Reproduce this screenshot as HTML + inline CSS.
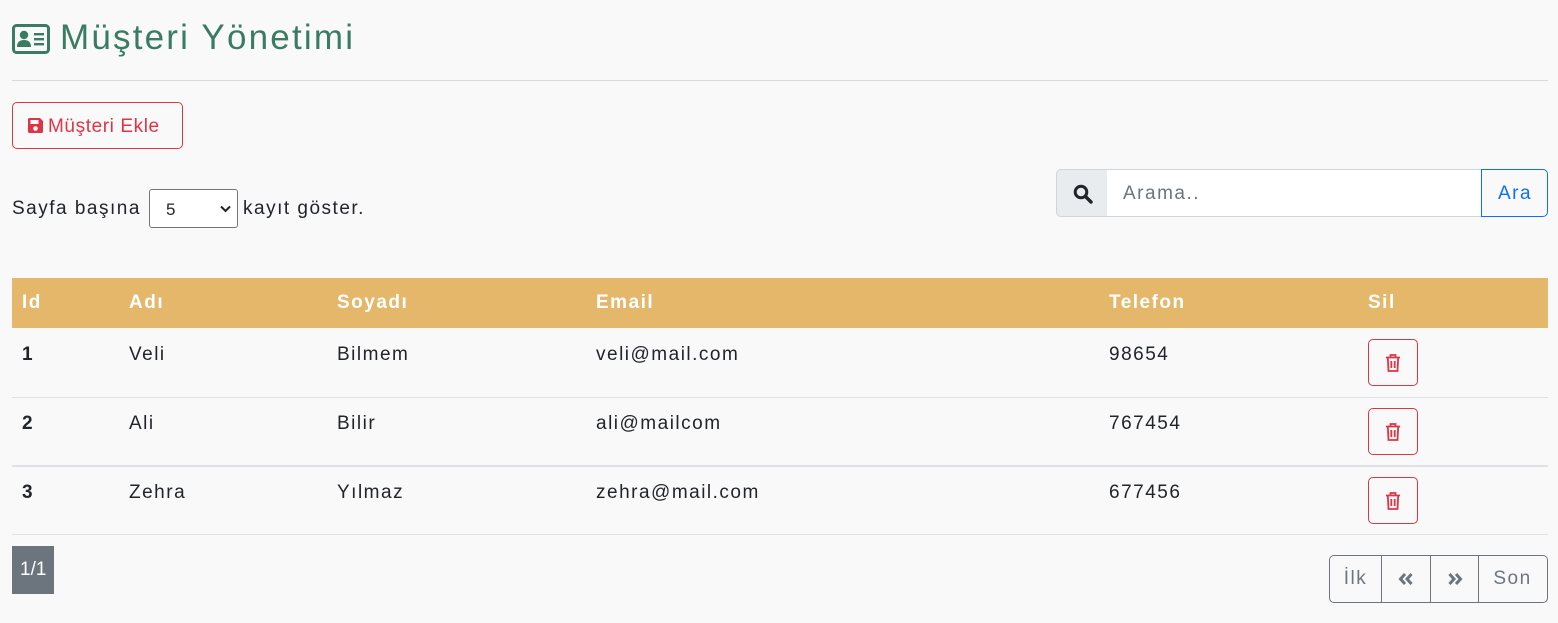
<!DOCTYPE html>
<html><head><meta charset="utf-8"><style>
*{box-sizing:border-box;margin:0;padding:0}
body{width:1558px;height:623px;background:#f9f9f9;font-family:"Liberation Sans",sans-serif;color:#212529;position:relative;overflow:hidden;font-size:19px;letter-spacing:1.5px}
.a{position:absolute;white-space:nowrap}
h1{position:absolute;left:60px;top:18px;font-size:35px;font-weight:normal;color:#3a7b64;letter-spacing:2.2px}
.hr{left:12px;top:80px;width:1536px;height:1px;background:#d6dbdb}
.btn1{left:12px;top:102px;width:171px;height:47px;border:1px solid #dc3545;border-radius:5px;color:#dc3545;font-size:19px;padding:13px 0 0 14px;white-space:nowrap;letter-spacing:0.6px}
.sel{left:149px;top:189px;width:89px;height:39px;border:1px solid #767676;border-radius:3px;background:#fff;font-size:17px;padding:10px 0 0 16px}
.th{top:278px;left:12px;width:1536px;height:50px;background:#e5b76b}
.th span{position:absolute;top:14px;color:#fff;font-weight:bold;font-size:19px}
.row span{position:absolute;font-size:19px}
.line{left:12px;width:1536px;height:1px;background:#dee2e6}
.del{width:50px;height:47px;border:1px solid #dc3545;border-radius:5px;left:1368px;display:flex;align-items:center;justify-content:center}
.pg{top:555px;height:48px;border:1px solid #6c757d;color:#6c757d;display:flex;align-items:center;justify-content:center;font-size:19px}
</style></head><body>
<svg class="a" style="left:12px;top:24px" width="38" height="30" viewBox="0 0 38 30"><rect x="1.5" y="1.5" width="35" height="27" rx="3" fill="none" stroke="#3a7b64" stroke-width="3"/><circle cx="12" cy="11" r="4.2" fill="#3a7b64"/><path d="M5 23 Q5 16 12 16 Q19 16 19 23Z" fill="#3a7b64"/><rect x="22" y="9" width="10" height="2.4" fill="#3a7b64"/><rect x="22" y="14" width="10" height="2.4" fill="#3a7b64"/><rect x="22" y="19" width="10" height="2.4" fill="#3a7b64"/></svg>
<h1>Müşteri Yönetimi</h1>
<div class="a hr"></div>
<div class="a btn1"><svg width="17" height="17" viewBox="0 0 17 17" style="vertical-align:-2px;margin-right:4px"><path d="M1 2.5Q1 1 2.5 1H13L16 4V14.5Q16 16 14.5 16H2.5Q1 16 1 14.5Z" fill="#dc3545"/><rect x="3.5" y="3" width="8" height="4" fill="#fff"/><circle cx="8.5" cy="11.5" r="2.3" fill="#fff"/></svg>Müşteri Ekle</div>
<div class="a" style="left:12px;top:198px">Sayfa başına</div>
<div class="a sel">5<svg style="position:absolute;right:6px;top:15px" width="11" height="8" viewBox="0 0 11 8"><path d="M1 1.5L5.5 6L10 1.5" fill="none" stroke="#222" stroke-width="2"/></svg></div>
<div class="a" style="left:243px;top:198px">kayıt göster.</div>
<div class="a" style="left:1056px;top:169px;width:52px;height:48px;background:#e9ecef;border:1px solid #ced4da;border-radius:5px 0 0 5px"><svg style="position:absolute;left:16px;top:14px" width="20" height="20" viewBox="0 0 20 20"><circle cx="8" cy="8" r="5.8" fill="none" stroke="#212529" stroke-width="3"/><path d="M12.5 12.5L18 18" stroke="#212529" stroke-width="3.4" stroke-linecap="round"/></svg></div>
<div class="a" style="left:1107px;top:169px;width:375px;height:48px;background:#fff;border:1px solid #ced4da;border-left:none;color:#6c757d;padding:13px 0 0 16px">Arama..</div>
<div class="a" style="left:1481px;top:169px;width:67px;height:48px;border:1px solid #0d6efd;border-radius:0 5px 5px 0;color:#0d6efd;padding:13px 0 0 16px">Ara</div>
<div class="a th"><span style="left:10px">Id</span><span style="left:117px">Adı</span><span style="left:325px">Soyadı</span><span style="left:584px">Email</span><span style="left:1097px">Telefon</span><span style="left:1356px">Sil</span></div>
<div class="row">
<span style="left:22px;top:344px;font-weight:bold">1</span><span style="left:129px;top:344px">Veli</span><span style="left:337px;top:344px">Bilmem</span><span style="left:596px;top:344px">veli@mail.com</span><span style="left:1109px;top:344px">98654</span>
<span style="left:22px;top:413px;font-weight:bold">2</span><span style="left:129px;top:413px">Ali</span><span style="left:337px;top:413px">Bilir</span><span style="left:596px;top:413px">ali@mailcom</span><span style="left:1109px;top:413px">767454</span>
<span style="left:22px;top:482px;font-weight:bold">3</span><span style="left:129px;top:482px">Zehra</span><span style="left:337px;top:482px">Yılmaz</span><span style="left:596px;top:482px">zehra@mail.com</span><span style="left:1109px;top:482px">677456</span>
</div>
<div class="a line" style="top:397px"></div>
<div class="a line" style="top:465px;height:2px"></div>
<div class="a line" style="top:534px"></div>
<div class="a del" style="top:339px"><svg width="16" height="20" viewBox="0 0 16 20"><path d="M1 4.5H15M5.5 4.5V2H10.5V4.5M2.8 4.5L3.5 18H12.5L13.2 4.5M6.3 8V15M9.7 8V15" fill="none" stroke="#dc3545" stroke-width="1.8"/></svg></div>
<div class="a del" style="top:408px"><svg width="16" height="20" viewBox="0 0 16 20"><path d="M1 4.5H15M5.5 4.5V2H10.5V4.5M2.8 4.5L3.5 18H12.5L13.2 4.5M6.3 8V15M9.7 8V15" fill="none" stroke="#dc3545" stroke-width="1.8"/></svg></div>
<div class="a del" style="top:477px"><svg width="16" height="20" viewBox="0 0 16 20"><path d="M1 4.5H15M5.5 4.5V2H10.5V4.5M2.8 4.5L3.5 18H12.5L13.2 4.5M6.3 8V15M9.7 8V15" fill="none" stroke="#dc3545" stroke-width="1.8"/></svg></div>
<div class="a" style="left:12px;top:546px;width:42px;height:48px;background:#6c757d;color:#fff;font-size:19px;padding:13px 0 0 8px;letter-spacing:0">1/1</div>
<div class="a pg" style="left:1329px;width:53px;border-radius:5px 0 0 5px">İlk</div>
<div class="a pg" style="left:1381px;width:50px;border-left:none"><svg width="16" height="14" viewBox="0 0 16 14"><path d="M7 2L2.5 7L7 12M13.5 2L9 7L13.5 12" fill="none" stroke="#6c757d" stroke-width="3"/></svg></div>
<div class="a pg" style="left:1430px;width:49px"><svg width="16" height="14" viewBox="0 0 16 14"><path d="M2.5 2L7 7L2.5 12M9 2L13.5 7L9 12" fill="none" stroke="#6c757d" stroke-width="3"/></svg></div>
<div class="a pg" style="left:1478px;width:70px;border-radius:0 5px 5px 0;border-left:none">Son</div>
</body></html>
